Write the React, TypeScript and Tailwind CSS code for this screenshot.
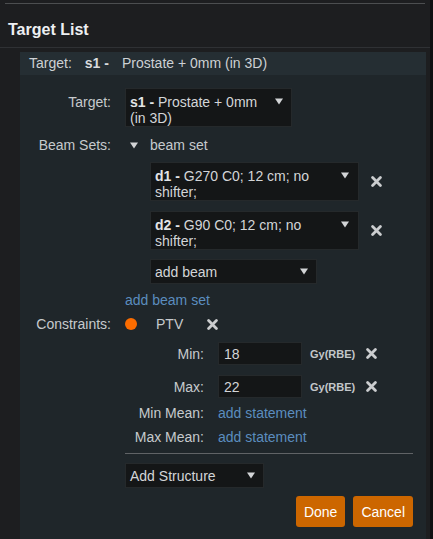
import type { ReactNode } from 'react';

// Small down-pointing caret used by the dropdown-style fields
function Caret() {
  return (
    <svg width="8" height="7" viewBox="0 0 8 7" className="shrink-0">
      <path d="M0 0.5h8L4 6.5z" fill="#d2d4d6" />
    </svg>
  );
}

// Heavy "x" used for remove actions
function RemoveIcon() {
  return (
    <svg width="11" height="11" viewBox="0 0 11 11" className="shrink-0">
      <path d="M1.6 1.6L9.4 9.4M9.4 1.6L1.6 9.4" stroke="#cbcdcf" strokeWidth="2.8" strokeLinecap="round" />
    </svg>
  );
}

interface RowProps {
  label?: string;
  className?: string;
  labelClassName?: string;
  children: ReactNode;
}

function FormRow({ label, className = '', labelClassName = '', children }: RowProps) {
  return (
    <div className={`flex items-start ${className}`}>
      <div className={`w-[91px] shrink-0 text-right leading-[16px] ${labelClassName}`}>{label}</div>
      <div className="ml-[14px] flex-1 min-w-0">{children}</div>
    </div>
  );
}

function SubRow({ label, className = '', children }: RowProps) {
  return (
    <div className={`flex items-center ${className}`}>
      <div className="w-[79px] shrink-0 text-right leading-[16px]">{label}</div>
      <div className="ml-[14px] flex items-center">{children}</div>
    </div>
  );
}

function BeamSelect({ id, text }: { id: string; text: string }) {
  return (
    <div className="flex items-center">
      <div className="flex h-[39px] w-[209px] items-start border border-[#25292b] bg-[#141617] pl-[4px] pr-[9px] pt-[5px] leading-[16px]">
        <div className="flex-1 text-[#d3d5d7]">
          <span className="font-bold text-[#e2e4e6]">{id} - </span>
          {text}
        </div>
        <div className="mt-[4px] ml-[4px]"><Caret /></div>
      </div>
      <div className="ml-[12px]"><RemoveIcon /></div>
    </div>
  );
}

function DoseInput({ value }: { value: string }) {
  return (
    <>
      <div className="flex h-[23px] w-[84px] items-center border border-[#25292b] bg-[#141617] pl-[5px] leading-[16px] text-[#d3d5d7]">
        {value}
      </div>
      <span className="ml-[8px] text-[11px] font-bold leading-[16px] text-[#c3c7ca]">Gy(RBE)</span>
      <div className="ml-[11px]"><RemoveIcon /></div>
    </>
  );
}

export default function App() {
  return (
    <div className="flex min-h-[539px] w-[433px] bg-[#1d1e20] font-[family-name:'Liberation_Sans',Arial,sans-serif] text-[14px] leading-[16px] text-[#c6cacd]">
      <div className="flex w-[430px] flex-col">
        <div className="mt-[3px] ml-[5px] h-px w-[420px] bg-[#4c4e50]" />
        <h2 className="mt-[17px] pl-[8px] text-[16px] font-bold leading-[18px] text-[#eef0f2]">Target List</h2>
        <div className="mt-[8px] h-px bg-[#2f3134]" />

        <div className="mt-[4px] ml-[20px] mr-[4px] flex flex-1 flex-col bg-[#1f262a]">
          <div className="h-[23px] bg-[#252e33] pl-[9px] leading-[23px] text-[#cdd1d4]">
            Target:
            <span className="ml-[13px] font-bold text-[#d8dbde]">s1 -</span>
            <span className="ml-[13px]">Prostate + 0mm (in 3D)</span>
          </div>

          <div className="flex flex-col pt-[13px] pr-[13px] pb-[12px]">
            <FormRow label="Target:" labelClassName="pt-[6px]">
              <div className="flex h-[39px] w-[167px] items-start border border-[#25292b] bg-[#141617] pl-[4px] pr-[8px] pt-[5px] leading-[16px]">
                <div className="flex-1 text-[#d3d5d7]">
                  <span className="font-bold text-[#e2e4e6]">s1 - </span>
                  Prostate + 0mm (in 3D)
                </div>
                <div className="mt-[4px] ml-[4px]"><Caret /></div>
              </div>
            </FormRow>

            <FormRow label="Beam Sets:" className="mt-[10px]">
              <div className="flex h-[16px] items-center">
                <div className="ml-[5px]"><Caret /></div>
                <span className="ml-[12px]">beam set</span>
              </div>
            </FormRow>

            <FormRow className="mt-[9px]">
              <div className="ml-[25px] flex flex-col">
                <BeamSelect id="d1" text="G270 C0; 12 cm; no shifter;" />
                <div className="mt-[10px]">
                  <BeamSelect id="d2" text="G90 C0; 12 cm; no shifter;" />
                </div>
                <div className="mt-[9px] flex h-[25px] w-[167px] items-center justify-between border border-[#25292b] bg-[#141617] pl-[4px] pr-[8px] text-[#d3d5d7]">
                  <span>add beam</span>
                  <Caret />
                </div>
              </div>
            </FormRow>

            <FormRow className="mt-[8px]">
              <div className="h-[16px] text-[#5b8dbf]">add beam set</div>
            </FormRow>

            <FormRow label="Constraints:" className="mt-[8px]">
              <div className="flex h-[16px] items-center">
                <span className="h-[12px] w-[12px] rounded-full bg-[#fb6c00]" />
                <span className="ml-[19px]">PTV</span>
                <div className="ml-[24px]"><RemoveIcon /></div>
              </div>
            </FormRow>

            <FormRow className="mt-[10px]">
              <SubRow label="Min:">
                <DoseInput value="18" />
              </SubRow>
              <SubRow label="Max:" className="mt-[10px]">
                <DoseInput value="22" />
              </SubRow>
              <SubRow label="Min Mean:" className="mt-[7px]">
                <span className="text-[#5b8dbf]">add statement</span>
              </SubRow>
              <SubRow label="Max Mean:" className="mt-[8px]">
                <span className="text-[#5b8dbf]">add statement</span>
              </SubRow>

              <div className="mt-[8px] h-px bg-[#606366]" />

              <div className="mt-[9px] flex h-[25px] w-[139px] items-center justify-between border border-[#25292b] bg-[#141617] pl-[4px] pr-[8px] text-[#d3d5d7]">
                <span>Add Structure</span>
                <Caret />
              </div>

              <div className="mt-[8px] flex justify-end gap-[8px]">
                <button className="h-[31px] rounded-[3px] bg-[#cc6600] px-[8px] text-white">Done</button>
                <button className="h-[31px] rounded-[3px] bg-[#cc6600] px-[8px] text-white">Cancel</button>
              </div>
            </FormRow>
          </div>
        </div>
      </div>
      <div className="w-[3px] bg-[#0f1011]" />
    </div>
  );
}
